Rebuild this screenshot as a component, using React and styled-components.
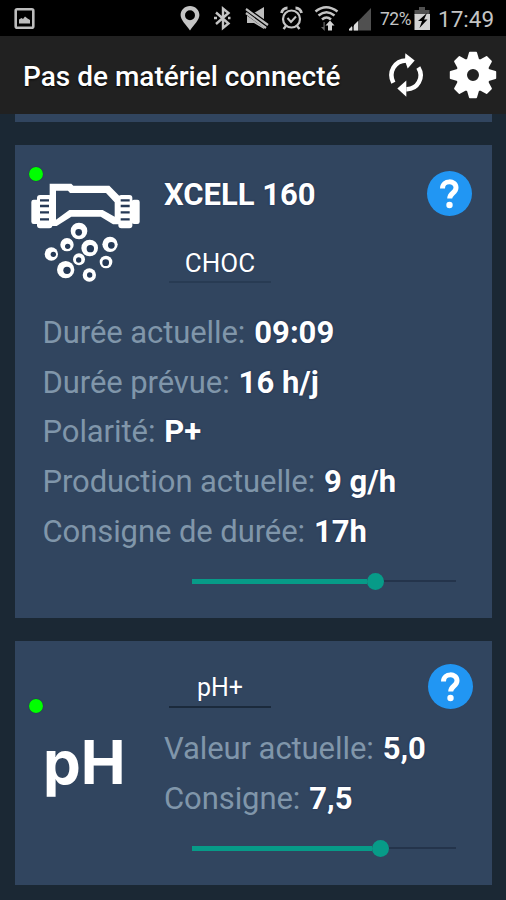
import React from "react";
import styled, { createGlobalStyle } from "styled-components";

const GlobalStyle = createGlobalStyle`
  * { box-sizing: border-box; }
  body { margin: 0; background: #1b2834; }
  svg { display: block; flex: none; }
`;

const Screen = styled.div`
  width: 506px;
  height: 900px;
  overflow: hidden;
  display: flex;
  flex-direction: column;
  background: #1b2834;
  color: #fff;
  font-family: Roboto, "Liberation Sans", sans-serif;
`;

const StatusBar = styled.div`
  flex: none;
  height: 36px;
  padding: 0 12px 0 12px;
  display: flex;
  align-items: center;
  background: #000;
  color: #c4c4c4;
`;

const StatusIcons = styled.div`
  margin-left: 142px;
  display: flex;
  gap: 9px;
`;

const Battery = styled.div`
  margin-left: 7px;
  display: flex;
  align-items: center;
`;

const Percent = styled.span`
  width: 34px;
  font-size: 17.5px;
  line-height: 20px;
  letter-spacing: -0.5px;
  padding-top: 1px;
  white-space: nowrap;
`;

const Clock = styled.span`
  margin-left: 6px;
  padding-top: 1px;
  font-size: 22.5px;
  line-height: 26px;
  white-space: nowrap;
`;

const AppBar = styled.header`
  flex: none;
  height: 78px;
  display: flex;
  align-items: center;
  padding: 0 9px 0 23px;
  background: #212121;
`;

const Title = styled.h1`
  flex: 1;
  margin: 0;
  padding-top: 3px;
  font-size: 28px;
  line-height: 34px;
  font-weight: 500;
  white-space: nowrap;
  text-shadow: 0 1px 2px #000;
`;

const Actions = styled.div`
  display: flex;
  align-items: center;
  gap: 18px;
`;

const List = styled.main`
  flex: 1;
  min-height: 0;
  display: flex;
  flex-direction: column;
  gap: 23px;
  padding: 0 14px 0 15px;
`;

const Card = styled.section`
  flex: none;
  height: ${(p) => p.$height}px;
  background: #31455f;
`;

const CardGrid = styled.div`
  display: grid;
  grid-template-columns: 149px 1fr 45px;
  padding-right: ${(p) => p.$right}px;
  height: ${(p) => p.$height};
`;

const Aside = styled.div`
  display: flex;
  flex-direction: column;
  align-items: flex-start;
  padding: ${(p) => p.$top}px 0 0 13.5px;
`;

const Dot = styled.span`
  width: 14px;
  height: 14px;
  border-radius: 50%;
  background: #00ff00;
  box-shadow: 0 0 1px #12203c;
`;

const CellDrawing = styled.svg`
  margin-left: 1.5px;
  margin-top: 0.5px;
`;

const PhLogo = styled.div`
  margin: 17px 0 0 14.5px;
  font-family: Inter, "Open Sans", sans-serif;
  font-size: 60px;
  line-height: 64px;
  font-weight: 700;
`;

const Main = styled.div`
  display: flex;
  flex-direction: column;
  align-items: flex-start;
`;

const DeviceName = styled.h2`
  margin: 30px 0 0;
  font-size: 31px;
  line-height: 40px;
  font-weight: 700;
  white-space: nowrap;
  text-shadow: 0 0 2px #182850;
`;

const Mode = styled.button`
  margin: ${(p) => p.$top}px 0 0 5px;
  padding: 0;
  width: 102px;
  height: 40px;
  border: 0;
  border-bottom: 2px solid ${(p) => p.$line};
  background: none;
  color: #fff;
  font-family: inherit;
  font-size: ${(p) => p.$size}px;
  line-height: ${(p) => p.$leading}px;
  text-align: center;
  text-shadow: 0 0 1px #182850;
`;

const Help = styled.button`
  margin-top: ${(p) => p.$top}px;
  width: 45px;
  height: 45px;
  padding: 0;
  border: 0;
  border-radius: 50%;
  background: #2196f3;
  display: flex;
  align-items: center;
  justify-content: center;
`;

const Readings = styled.dl`
  margin: ${(p) => p.$margin};
`;

const Reading = styled.div`
  display: flex;
  gap: 9px;
  height: 49.7px;
  font-size: 31px;
  line-height: 50px;
  white-space: nowrap;
`;

const Label = styled.dt`
  color: #8096aa;
  letter-spacing: -0.08px;
`;

const Value = styled.dd`
  margin: 0;
  font-weight: 700;
  text-shadow: 0 0 2px #182850;
`;

const Slider = styled.div`
  display: flex;
  align-items: center;
  width: 264px;
  height: 18px;
  margin: ${(p) => p.$margin};
`;

const Filled = styled.span`
  width: ${(p) => p.$width}px;
  height: 5px;
  background: #079b88;
`;

const Thumb = styled.span`
  width: 17px;
  height: 17px;
  border-radius: 50%;
  background: #079b88;
`;

const Remaining = styled.span`
  flex: 1;
  height: 2px;
  background: #24344b;
`;

const PictureIcon = () => (
  <svg width="24" height="24" viewBox="0 0 24 24">
    <rect x="3.7" y="3.2" width="17.6" height="18.6" rx="1.5" fill="none" stroke="#bdbdbd" strokeWidth="2.6" />
    <path d="M7 17.5v-4l2.5-1.5 1.5 1 2-2.5 2.5 2 2.5 1.5v3.5z" fill="#bdbdbd" />
  </svg>
);

const PinIcon = () => (
  <svg width="24" height="26" viewBox="0 0 24 26">
    <path fillRule="evenodd" fill="#c4c4c4" d="M12 1C6.6 1 2.6 5 2.6 10c0 5 5.4 9.500 9.400 15.500C16 19.500 21.400 15 21.400 10 21.400 5 17.400 1 12 1zm0 4.200a5 5 0 1 1 0 10 5 5 0 0 1 0-10z" />
  </svg>
);

const BluetoothIcon = () => (
  <svg width="24" height="26" viewBox="0 0 24 26" fill="none" stroke="#c4c4c4" strokeWidth="2.400">
    <path d="M5 7.500L17.500 18.500 12 23V3.500L17.500 8 5 19M3 13h3M17 13h2.500" />
  </svg>
);

const MuteIcon = () => (
  <svg width="26" height="26" viewBox="0 0 26 26">
    <path fill="#bdbdbd" d="M3 8h7l10-6v22l-10-6H3z" />
    <path d="M1 5l24 17" stroke="#000" strokeWidth="7" />
    <path d="M2 4l22 16M2 8l20 15" stroke="#bdbdbd" strokeWidth="2.200" />
  </svg>
);

const AlarmIcon = () => (
  <svg width="26" height="26" viewBox="0 0 26 26" fill="none" stroke="#c4c4c4">
    <circle cx="12.500" cy="14" r="8.500" strokeWidth="2.200" />
    <path d="M8.500 13l3.500 4 5-5.500" strokeWidth="2" />
    <path d="M2.500 8a6 6 0 0 1 6-5M22.500 8a6 6 0 0 0-6-5" strokeWidth="2.800" />
    <path d="M7 21l-2.500 3M18 21l2.500 3" strokeWidth="2.400" />
  </svg>
);

const WifiIcon = () => (
  <svg width="26" height="26" viewBox="0 0 26 26" fill="none">
    <path d="M1.500 6.500q10.500-8.500 22 0M4.500 10.500q8-6.500 16 0M8 14.500q4.500-4 9 0" stroke="#c4c4c4" strokeWidth="2.500" />
    <path d="M9.500 17v5H7l3.700 4V17z" fill="#666" />
    <path d="M14 25.500v-5h-2.500l4.500-5 4.500 5H18v5z" fill="#d2d2d2" />
  </svg>
);

const SignalIcon = () => (
  <svg width="24" height="26" viewBox="0 0 24 26">
    <path d="M0 25.500L22 3v22.500z" fill="#505050" />
    <path d="M0 25.500v-1.500l3-3v4.500zM5 25.500V20l4-4v9.500z" fill="#dedede" />
  </svg>
);

const BatteryIcon = () => (
  <svg width="18" height="26" viewBox="0 0 18 26">
    <path d="M5 2h6v3h4.500v5h-15V5H5z" fill="#505050" />
    <path d="M.5 9h15.500v16H.5z" fill="#d2d2d2" />
    <path d="M13 8l-9 8h4L5.500 23l8-8.500h-3.500z" fill="#000" />
  </svg>
);

const RefreshIcon = () => (
  <svg width="50" height="47" viewBox="-3 22.5 150 141">
    <path d="M34 115C18 83 38 48 73 48" fill="none" stroke="#fff" strokeWidth="13.500" />
    <path d="M70 26L98 48L77 72L69 49z" fill="#fff" />
    <path d="M109 69C127 99 107 135 73 134" fill="none" stroke="#fff" strokeWidth="13.500" />
    <path d="M73 108L46 132L73 157z" fill="#fff" />
  </svg>
);

const GearIcon = () => (
  <svg width="48" height="48" viewBox="-24 -24 48 48">
    <circle r="11.500" fill="none" stroke="#fff" strokeWidth="11" />
    {[0, 45, 90, 135, 180, 225, 270, 315].map((a) => (
      <path key={a} transform={`rotate(${a})`} d="M-6.500-14L-4-22.500Q-3.800-23.200-3.200-23.200H3.200Q3.800-23.200 4-22.500L6.500-14z" fill="#fff" />
    ))}
  </svg>
);

const QuestionIcon = () => (
  <svg width="45" height="45" viewBox="0 0 45 45" fill="none">
    <path d="M15.500 17.500C15.500 8.700 29 8.900 29 16.700C29 22 22.700 22 22.700 27.500" stroke="#fff" strokeWidth="5" />
    <circle cx="22.500" cy="34" r="3.200" fill="#fff" />
  </svg>
);

const bubbles = [
  [207, 272, 25, 206, 276, 10],
  [171, 313, 20, 173, 318, 8],
  [124, 341, 20, 130, 342, 8],
  [239, 323, 25, 241, 325, 11],
  [300, 312, 23, 304, 315, 10],
  [207, 357, 18, 206, 359, 8],
  [288, 365, 19, 287, 367, 10],
  [167, 388, 26, 171, 390, 11],
  [238, 404, 20, 239, 404, 8],
];

const CellIcon = () => (
  <CellDrawing width="111.700" height="101.700" viewBox="60 125 335 305">
    <path
      fillRule="evenodd"
      fill="#fff"
      d="M119 130H184L190 136H298L329 168V252H309L272 229H184L140 257H119zM138 151V238L178 209H278L314 229V186L288 158H180L174 151z"
    />
    <g fill="#fff">
      <rect x="64" y="178" width="24" height="73" rx="7" />
      <rect x="81" y="164" width="46" height="100" rx="9" />
      <rect x="365" y="178" width="24" height="73" rx="7" />
      <rect x="325" y="164" width="42" height="100" rx="9" />
    </g>
    <path d="M90 180h27M90 197h27M90 216h27M90 237h27M332 180h27M332 197h27M332 216h27M332 237h27" stroke="#253956" strokeWidth="7" />
    {bubbles.map(([x, y, r, ix, iy, ir]) => (
      <g key={`${x}-${y}`}>
        <circle cx={x} cy={y} r={r} fill="#fff" />
        <circle cx={ix} cy={iy} r={ir} fill="#253956" />
      </g>
    ))}
  </CellDrawing>
);

const HelpButton = ({ top }) => (
  <Help $top={top} aria-label="Aide">
    <QuestionIcon />
  </Help>
);

const ReadingList = ({ items, margin }) => (
  <Readings $margin={margin}>
    {items.map(([label, value]) => (
      <Reading key={label}>
        <Label>{label}</Label>
        <Value>{value}</Value>
      </Reading>
    ))}
  </Readings>
);

const Range = ({ width, margin }) => (
  <Slider $margin={margin}>
    <Filled $width={width} />
    <Thumb />
    <Remaining />
  </Slider>
);

export default function App() {
  return (
    <Screen>
      <GlobalStyle />
      <StatusBar>
        <PictureIcon />
        <StatusIcons>
          <PinIcon />
          <BluetoothIcon />
          <MuteIcon />
          <AlarmIcon />
          <WifiIcon />
          <SignalIcon />
        </StatusIcons>
        <Battery>
          <Percent>72%</Percent>
          <BatteryIcon />
        </Battery>
        <Clock>17:49</Clock>
      </StatusBar>
      <AppBar>
        <Title>Pas de matériel connecté</Title>
        <Actions>
          <RefreshIcon />
          <GearIcon />
        </Actions>
      </AppBar>
      <List>
        <Card $height={8} />
        <Card $height={472.500}>
          <CardGrid $right={20} $height="163px">
            <Aside $top={22}>
              <Dot />
              <CellIcon />
            </Aside>
            <Main>
              <DeviceName>XCELL 160</DeviceName>
              <Mode $top={28} $size={26} $leading={40} $line="#283b53">CHOC</Mode>
            </Main>
            <HelpButton top={26} />
          </CardGrid>
          <ReadingList
            margin="0 0 0 27.500px"
            items={[
              ["Durée actuelle:", "09:09"],
              ["Durée prévue:", "16 h/j"],
              ["Polarité:", "P+"],
              ["Production actuelle:", "9 g/h"],
              ["Consigne de durée:", "17h"],
            ]}
          />
          <Range width={175.500} margin="16px 0 0 176.500px" />
        </Card>
        <Card $height={244}>
          <CardGrid $right={19} $height="198.500px">
            <Aside $top={58.500}>
              <Dot />
              <PhLogo>pH</PhLogo>
            </Aside>
            <Main>
              <Mode $top={27} $size={25} $leading={40} $line="#1b2a3c">pH+</Mode>
              <ReadingList
                margin="16.500px 0 0"
                items={[
                  ["Valeur actuelle:", "5,0"],
                  ["Consigne:", "7,5"],
                ]}
              />
            </Main>
            <HelpButton top={23} />
          </CardGrid>
          <Range width={180.500} margin="0 0 0 176.500px" />
        </Card>
      </List>
    </Screen>
  );
}
